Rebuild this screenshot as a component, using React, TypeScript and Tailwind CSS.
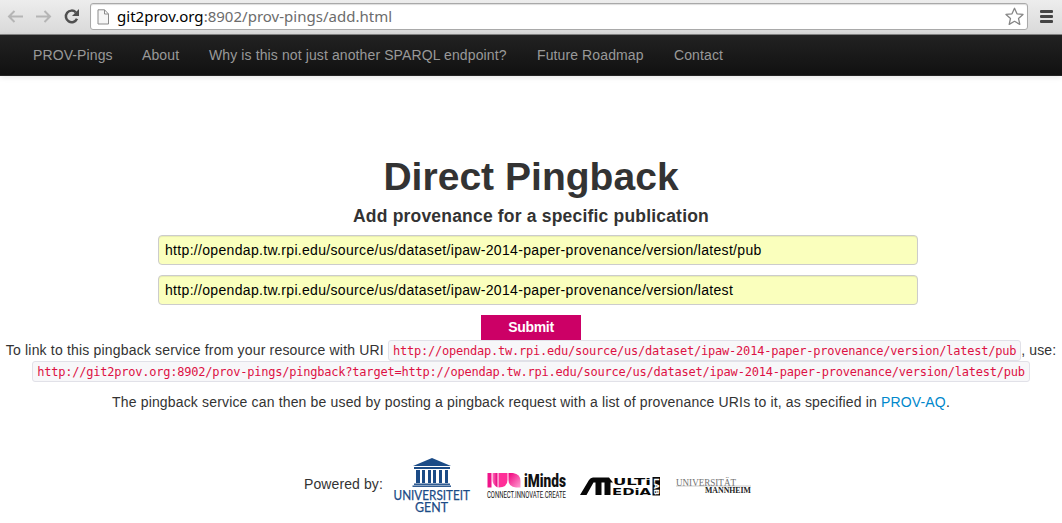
import React from 'react';

const PUB = 'http://opendap.tw.rpi.edu/source/us/dataset/ipaw-2014-paper-provenance/version/latest/pub';

function BrowserBar() {
  return (
    <div className="flex h-[35px] items-start border-b border-[#858585] bg-gradient-to-b from-[#ededed] to-[#d9d9d9] pt-[3px]">
      <svg className="h-[28px] w-[90px] shrink-0" viewBox="0 0 90 28" fill="none">
        <g stroke="#b5b5b5" strokeWidth="2">
          <path d="M9 13.5H23M14.5 8L9 13.5L14.5 19" />
          <path d="M36 13.5H50M44.5 8L50 13.5L44.5 19" />
        </g>
        <path d="M75.8 9.3A5.8 5.8 0 1 0 77 15.8" stroke="#505050" strokeWidth="2.5" />
        <path d="M79 6V13H72Z" fill="#505050" />
      </svg>
      <div className="flex h-[27px] w-[938px] shrink-0 items-center rounded-[3px] border border-[#a9a9a9] bg-white shadow-[inset_0_1px_1px_#ddd]">
        <svg className="ml-[6px] h-[16px] w-[13px] shrink-0" viewBox="0 0 13 16" fill="#f6f6f6" stroke="#8b8b8b">
          <path d="M1 .8H7.5L11.5 5V15H1ZM7.5 .8V5H11.5" />
        </svg>
        <div className="ml-[7px] w-[887px] shrink-0 whitespace-nowrap font-['Noto_Sans',sans-serif] text-[15px] leading-[25px] tracking-[0.02px] text-[#6c6c6c]">
          <span className="text-black">git2prov.org</span>:8902/prov-pings/add.html
        </div>
        <svg className="h-[19px] w-[20px] shrink-0" viewBox="0 0 20 19" fill="white" stroke="#858585" strokeWidth="1.3" strokeLinejoin="round">
          <path d="M10.5 1.3L13 6.8L19 7.4L14.5 11.4L15.8 17.4L10.5 14.3L5.2 17.4L6.5 11.4L2 7.4L8 6.8Z" />
        </svg>
      </div>
      <svg className="ml-[12px] mt-[6px] h-[15px] w-[14px]" viewBox="0 0 14 15" fill="#444">
        <rect y="1" width="13" height="3" rx="1" />
        <rect y="6" width="13" height="3" rx="1" />
        <rect y="11" width="13" height="3" rx="1" />
      </svg>
    </div>
  );
}

function NavBar() {
  return (
    <nav className="flex h-[41px] whitespace-nowrap border-b border-[#252525] bg-gradient-to-b from-[#222] to-[#111] pl-[33px] text-[14px] leading-[40px] tracking-[0.11px] text-[#999] shadow-[0_1px_6px_rgba(0,0,0,0.1)]">
      <a className="w-[109px]">PROV-Pings</a>
      <a className="w-[67px]">About</a>
      <a className="w-[328px]">Why is this not just another SPARQL endpoint?</a>
      <a className="w-[137px]">Future Roadmap</a>
      <a>Contact</a>
    </nav>
  );
}

function UrlField({ value }: { value: string }) {
  return (
    <div className="mt-[10px] h-[30px] w-[760px] translate-x-[7px] rounded-[4px] border border-[#ccc] bg-[#faffbd] px-[6px] leading-[28px] tracking-[0.32px] text-black shadow-[inset_0_1px_1px_rgba(0,0,0,0.075)]">
      {value}
    </div>
  );
}

function Code({ children }: { children: React.ReactNode }) {
  return (
    <code className="inline-block h-[21px] rounded-[3px] border border-[#e1e1e8] bg-[#f7f7f9] px-[4px] font-['DejaVu_Sans_Mono',monospace] text-[12px] leading-[20px] tracking-[-0.22px] text-[#dd1144]">
      {children}
    </code>
  );
}

function GentLogo() {
  return (
    <svg className="h-[58px] w-[80px] shrink-0 overflow-visible" viewBox="0 0 80 58" fill="#1b4b86">
      <path d="M40 0L59 8H21Z" />
      <rect x="22" y="9" width="36" height="2" />
      <path d="M24 12H28V25H24ZM30 12H33V25H30ZM36 12H39V25H36ZM41 12H44V25H41ZM47 12H50V25H47ZM53 12H56V25H53Z" />
      <rect x="22" y="25.5" width="36" height="1.4" />
      <rect x="20.5" y="27.5" width="38.5" height="1.4" />
      <g fontFamily="Lato, sans-serif" fontSize="14" stroke="#1b4b86" strokeWidth=".25">
        <text x="1.5" y="42.3" textLength="76.5" lengthAdjust="spacingAndGlyphs">UNIVERSITEIT</text>
        <text x="23" y="54.3" textLength="33" lengthAdjust="spacingAndGlyphs">GENT</text>
      </g>
    </svg>
  );
}

function IMindsLogo() {
  return (
    <svg className="h-[28px] w-[80px] shrink-0 overflow-visible" viewBox="0 0 80 28">
      <defs>
        <linearGradient id="pink" x1="0" y1="0" x2="1" y2="1"><stop stopColor="#f0007c" /><stop offset="1" stopColor="#ff9ed2" /></linearGradient>
        <linearGradient id="rose"><stop stopColor="#ff70b8" /><stop offset="1" stopColor="#e6007e" /></linearGradient>
      </defs>
      <rect x="0.5" y="0" width="4" height="14.5" fill="#f0148a" />
      <path d="M5.5 0H10.5V14.5Q5.500 12 5.500 7Z" fill="url(#rose)" />
      <path d="M11.5 0H20.500V7Q20.500 14.500 11.500 14.500Z" fill="#ff2e98" />
      <path d="M21.5 0H26Q33.500 1 33.500 8V14.500H29Q21.500 14 21.500 7Z" fill="url(#pink)" />
      <g fontFamily="Roboto, sans-serif" fill="#111">
        <text x="37" y="14.200" fontSize="18.500" fontWeight="900" textLength="42" lengthAdjust="spacingAndGlyphs">iMinds</text>
        <text x="0" y="25" fontSize="9.2" textLength="79" lengthAdjust="spacingAndGlyphs">CONNECT.INNOVATE.CREATE</text>
      </g>
    </svg>
  );
}

function MultimediaLogo() {
  return (
    <svg className="h-[22px] w-[82px] shrink-0 overflow-visible" viewBox="0 0 82 22">
      <path d="M0 19L9 4Q10.500 1.500 13 1.500H29L33 6.500H30.500V19H24.500V6.500H21.500V19H15.500V6.500H13.500L6.500 19Z" fill="#080808" />
      <g fontFamily="'DejaVu Sans', sans-serif" fontWeight="700" fontSize="9.500" fill="#080808">
        <text x="33" y="8.500" textLength="38" lengthAdjust="spacingAndGlyphs">ULTi</text>
        <text x="32" y="19" textLength="39" lengthAdjust="spacingAndGlyphs">EDiA</text>
      </g>
      <rect x="72.500" y="1" width="7.500" height="18.500" fill="#080808" />
      <text transform="translate(73.800 2) rotate(90)" fontFamily="'DejaVu Sans', sans-serif" fontWeight="700" fontSize="7" textLength="17" lengthAdjust="spacingAndGlyphs" fill="white">LAB</text>
    </svg>
  );
}

function MannheimLogo() {
  return (
    <svg className="h-[18px] w-[77px] shrink-0 overflow-visible" viewBox="0 0 77 18" fontFamily="'Liberation Serif', serif">
      <text x="0" y="7.500" fontSize="9.500" fill="#707070" textLength="60" lengthAdjust="spacingAndGlyphs">UNIVERSITÄT</text>
      <path d="M0 8H75" stroke="#aaa" strokeWidth=".6" />
      <text x="29" y="14.500" fontSize="9" fontWeight="700" fill="#222" textLength="46" lengthAdjust="spacingAndGlyphs">MANNHEIM</text>
    </svg>
  );
}

export default function App() {
  return (
    <div className="h-[523px] w-[1062px] overflow-hidden bg-white font-['Liberation_Sans',Arial,sans-serif] text-[14px] leading-[20px] text-[#333]">
      <BrowserBar />
      <NavBar />
      <main className="flex flex-col items-center whitespace-nowrap pt-[80px]">
        <h1 className="h-[40px] text-[39px] font-bold leading-[41px] tracking-[0.03px]">Direct Pingback</h1>
        <h4 className="mb-[-1px] mt-[10px] h-[20px] text-[17.5px] font-bold leading-[20px] tracking-[0.19px]">Add provenance for a specific publication</h4>
        <UrlField value={PUB} />
        <UrlField value={PUB.replace('/pub', '')} />
        <button className="mt-[10px] h-[25px] w-[100px] bg-[#cc0066] font-bold leading-[25px] tracking-[-0.3px] text-white">Submit</button>
        <p className="flex h-[21px]">
          <span className="mr-[4px] tracking-[0.18px]">To link to this pingback service from your resource with URI</span>
          <Code>{PUB}</Code>
          <span className="tracking-[0.1px]">, use:</span>
        </p>
        <p className="flex h-[21px]"><Code>http://git2prov.org:8902/prov-pings/pingback?target={PUB}</Code></p>
        <p className="mt-[10px] tracking-[0.16px]">
          The pingback service can then be used by posting a pingback request with a list of provenance URIs to it, as specified in <a className="text-[#0088cc]">PROV-AQ</a>.
        </p>
        <footer className="mt-[46px] flex h-[58px] w-[454px] items-center">
          <span className="mr-[8px] w-[80px] pb-[7px] tracking-[0.1px]">Powered by:</span>
          <GentLogo />
          <div className="ml-[15px]"><IMindsLogo /></div>
          <div className="ml-[13px]"><MultimediaLogo /></div>
          <div className="ml-[14px]"><MannheimLogo /></div>
        </footer>
      </main>
    </div>
  );
}
